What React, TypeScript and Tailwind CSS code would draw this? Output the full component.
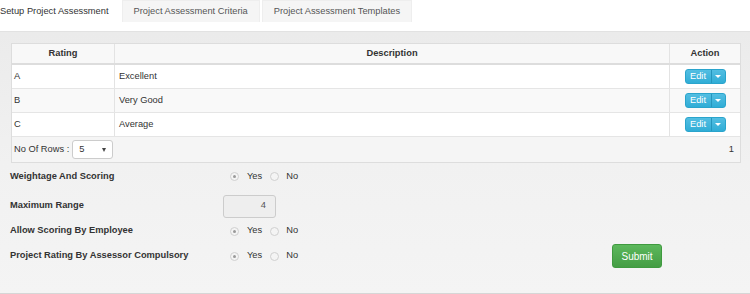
import React from "react";

const font = { fontFamily: '"Liberation Sans", Arial, sans-serif' };

function Radio({ checked }: { checked?: boolean }) {
  return (
    <span className="w-[9px] h-[9px] rounded-full border border-[#d0d0d0] bg-[#f4f4f4] flex items-center justify-center">
      {checked && <span className="w-[3px] h-[3px] rounded-full bg-[#9a9a9a]" />}
    </span>
  );
}

function YesNo() {
  return (
    <div className="flex items-center pl-[7px]">
      <Radio checked />
      <span className="ml-[8px] text-[#333]">Yes</span>
      <span className="ml-[8px]">
        <Radio />
      </span>
      <span className="ml-[7px] text-[#333]">No</span>
    </div>
  );
}

function EditBtn() {
  return (
    <div className="flex h-[15px] w-[41px] rounded-[3px] border border-[#2aa4cc] bg-gradient-to-b from-[#52bee2] to-[#2fadd6] text-white overflow-hidden">
      <div className="w-[26px] flex items-center justify-center border-r border-[#2596bd] text-[9.3px] leading-none">Edit</div>
      <div className="flex-1 flex items-center justify-center">
        <span className="w-0 h-0 border-l-[3px] border-r-[3px] border-t-[3px] border-l-transparent border-r-transparent border-t-white" />
      </div>
    </div>
  );
}

export default function App() {
  const rows = [
    { r: "A", d: "Excellent" },
    { r: "B", d: "Very Good" },
    { r: "C", d: "Average" },
  ];
  return (
    <div style={font} className="w-[750px] h-[294px] bg-white text-[9.3px] text-[#333] flex flex-col overflow-hidden">
      {/* Tabs */}
      <div className="flex h-[22px] shrink-0 gap-[2px]">
        <div className="ml-[-11px] px-[11px] pt-[1px] bg-white flex items-center text-[#333]">Setup Project Assessment</div>
        <div className="px-[11px] pt-[1px] bg-[#f5f5f5] border border-b-0 border-[#eeeeee] flex items-center text-[#555]">Project Assessment Criteria</div>
        <div className="px-[11px] pt-[1px] bg-[#f5f5f5] border border-b-0 border-[#eeeeee] flex items-center text-[#555]">Project Assessment Templates</div>
      </div>
      <div className="h-[9px] shrink-0 bg-white" />
      {/* Panel */}
      <div className="flex-1 flex flex-col border-t border-[#e2e2e2] border-b border-b-[#d6d6d6] bg-gradient-to-b from-[#ebebeb] via-[#f1f1f1] to-[#f4f4f4] pt-[11px] pl-[11px] pr-[9px]">
        {/* Table */}
        <div className="w-[730px] border border-[#dddddd] bg-white">
          <div className="grid grid-cols-[103px_555px_1fr] h-[21px] bg-[#f8f8f8] border-b-2 border-[#dddddd] font-bold">
            <div className="flex items-center justify-center border-r border-[#e3e3e3]">Rating</div>
            <div className="flex items-center justify-center border-r border-[#e3e3e3]">Description</div>
            <div className="flex items-center justify-center">Action</div>
          </div>
          {rows.map((row, i) => (
            <div
              key={row.r}
              className={`grid grid-cols-[103px_555px_1fr] h-[24px] border-b border-[#e5e5e5] ${i === 1 ? "bg-[#f9f9f9]" : "bg-white"}`}
            >
              <div className="flex items-center px-[2px] border-r border-[#e3e3e3]">{row.r}</div>
              <div className="flex items-center px-[4px] border-r border-[#e3e3e3]">{row.d}</div>
              <div className="flex items-center justify-center">
                <EditBtn />
              </div>
            </div>
          ))}
          <div className="h-[25px] bg-[#f5f5f5] flex items-center justify-between pl-[2px] pr-[6px]">
            <div className="flex items-center">
              <span className="text-[#333]">No Of Rows :</span>
              <div className="ml-[3px] w-[41px] h-[19px] rounded-[3px] border border-[#cccccc] bg-white flex items-center justify-between pl-[6px] pr-[6px]">
                <span>5</span>
                <span className="w-0 h-0 border-l-[2.5px] border-r-[2.5px] border-t-[4px] border-l-transparent border-r-transparent border-t-[#444]" />
              </div>
            </div>
            <span>1</span>
          </div>
        </div>
        {/* Form */}
        <div className="flex flex-col font-bold ml-[-1px]">
          <div className="h-[27px] flex items-center">
            <div className="w-[213px]">Weightage And Scoring</div>
            <div className="font-normal">
              <YesNo />
            </div>
          </div>
          <div className="h-[32px] flex items-center">
            <div className="w-[213px]">Maximum Range</div>
            <div className="w-[53px] h-[23px] rounded-[3px] border border-[#cccccc] bg-[#eeeeee] flex items-center justify-end pr-[9px] font-normal text-[#555]">
              4
            </div>
          </div>
          <div className="h-[18px] flex items-center">
            <div className="w-[213px]">Allow Scoring By Employee</div>
            <div className="font-normal">
              <YesNo />
            </div>
          </div>
          <div className="h-[32px] flex items-center">
            <div className="w-[213px]">Project Rating By Assessor Compulsory</div>
            <div className="font-normal">
              <YesNo />
            </div>
            <button className="ml-[314px] w-[50px] h-[24px] rounded-[3px] border border-[#3f9a3f] bg-gradient-to-b from-[#5cb85c] to-[#449d44] text-white font-normal text-[10px] flex items-center justify-center">
              Submit
            </button>
          </div>
        </div>
      </div>
    </div>
  );
}
